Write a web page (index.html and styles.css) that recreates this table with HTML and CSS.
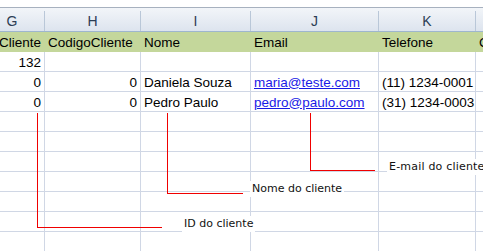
FILE: index.html
```html
<!DOCTYPE html>
<html>
<head>
<meta charset="utf-8">
<link rel="stylesheet" href="styles.css">
</head>
<body>
<div class="sheet">
  <div class="topbar"></div>
  <div class="row colhead">
    <div class="cell">G</div>
    <div class="cell">H</div>
    <div class="cell">I</div>
    <div class="cell">J</div>
    <div class="cell">K</div>
    <div class="cell">L</div>
  </div>
  <div class="row fields">
    <div class="cell clip">IdCliente</div>
    <div class="cell">CodigoCliente</div>
    <div class="cell">Nome</div>
    <div class="cell">Email</div>
    <div class="cell">Telefone</div>
    <div class="cell">Cidade</div>
  </div>
  <div class="row data">
    <div class="cell num">132</div>
    <div class="cell"></div>
    <div class="cell"></div>
    <div class="cell"></div>
    <div class="cell"></div>
    <div class="cell"></div>
  </div>
  <div class="row data">
    <div class="cell num">0</div>
    <div class="cell num">0</div>
    <div class="cell">Daniela Souza</div>
    <div class="cell"><a class="link" href="#">maria@teste.com</a></div>
    <div class="cell">(11) 1234-0001</div>
    <div class="cell"></div>
  </div>
  <div class="row data">
    <div class="cell num">0</div>
    <div class="cell num">0</div>
    <div class="cell">Pedro Paulo</div>
    <div class="cell"><a class="link" href="#">pedro@paulo.com</a></div>
    <div class="cell">(31) 1234-0003</div>
    <div class="cell"></div>
  </div>
  <div class="row data"><div class="cell"></div><div class="cell"></div><div class="cell"></div><div class="cell"></div><div class="cell"></div><div class="cell"></div></div>
  <div class="row data"><div class="cell"></div><div class="cell"></div><div class="cell"></div><div class="cell"></div><div class="cell"></div><div class="cell"></div></div>
  <div class="row data"><div class="cell"></div><div class="cell"></div><div class="cell"></div><div class="cell"></div><div class="cell"></div><div class="cell"></div></div>
  <div class="row data"><div class="cell"></div><div class="cell"></div><div class="cell"></div><div class="cell"></div><div class="cell"></div><div class="cell"></div></div>
  <div class="row data"><div class="cell"></div><div class="cell"></div><div class="cell"></div><div class="cell"></div><div class="cell"></div><div class="cell"></div></div>
  <div class="row data"><div class="cell"></div><div class="cell"></div><div class="cell"></div><div class="cell"></div><div class="cell"></div><div class="cell"></div></div>
  <div class="row data"><div class="cell"></div><div class="cell"></div><div class="cell"></div><div class="cell"></div><div class="cell"></div><div class="cell"></div></div>

  <div class="callout callout-id"></div>
  <div class="callout callout-nome"></div>
  <div class="callout callout-email"></div>
  <span class="note note-id">ID do cliente</span>
  <span class="note note-nome">Nome do cliente</span>
  <span class="note note-email">E-mail do cliente</span>
</div>
</body>
</html>
```

FILE: styles.css
```css
html, body {
  margin: 0;
  padding: 0;
  background: #ffffff;
}
body {
  width: 483px;
  height: 251px;
  overflow: hidden;
}
.sheet {
  position: relative;
  width: 483px;
  height: 251px;
  overflow: hidden;
  font-family: "Liberation Sans", Arial, sans-serif;
  font-size: 13.5px;
  color: #000;
}
.topbar {
  height: 7px;
  background: #ffffff;
}
.row {
  display: grid;
  grid-template-columns: 65px 96px 110px 128px 97px 100px;
  margin-left: -20px;
}
.cell {
  box-sizing: border-box;
  display: flex;
  align-items: center;
  padding: 0 3px;
  white-space: nowrap;
  overflow: hidden;
}
.colhead {
  border-top: 1px solid #a7b1bf;
  border-bottom: 1px solid #9eb6ce;
  padding-top: 3px;
  background: linear-gradient(#f2f5f9, #dde4ee);
}
.colhead .cell {
  height: 20px;
  justify-content: center;
  border-right: 1px solid #b9c7d8;
  color: #2c3d55;
  font-size: 14px;
}
.fields {
  background: #c4d79b;
}
.fields .cell {
  height: 20px;
  padding-top: 1px;
}
.fields .clip {
  justify-content: flex-end;
  padding-right: 4px;
}
.data .cell {
  height: 20px;
  border-right: 1px solid #d0d7e5;
  border-bottom: 1px solid #d0d7e5;
  padding-top: 1px;
}
.data .num {
  justify-content: flex-end;
}
.link {
  color: #1a1ae6;
  text-decoration: underline;
}
.callout {
  position: absolute;
  box-sizing: border-box;
  border-left: 1px solid #f00000;
  border-bottom: 1px solid #f00000;
}
.callout-id {
  left: 37px;
  top: 113px;
  width: 125px;
  height: 115px;
}
.callout-nome {
  left: 167px;
  top: 113px;
  width: 76px;
  height: 81px;
}
.callout-email {
  left: 310px;
  top: 113px;
  width: 65px;
  height: 58px;
}
.note {
  position: absolute;
  background: #ffffff;
  font-family: "DejaVu Sans", Verdana, sans-serif;
  font-size: 11px;
  line-height: 14px;
  padding: 1px 2px;
  color: #111;
  white-space: nowrap;
}
.note-id {
  left: 182px;
  top: 216px;
}
.note-nome {
  left: 250px;
  top: 181px;
}
.note-email {
  left: 387px;
  top: 159px;
  letter-spacing: 0.2px;
}
```
